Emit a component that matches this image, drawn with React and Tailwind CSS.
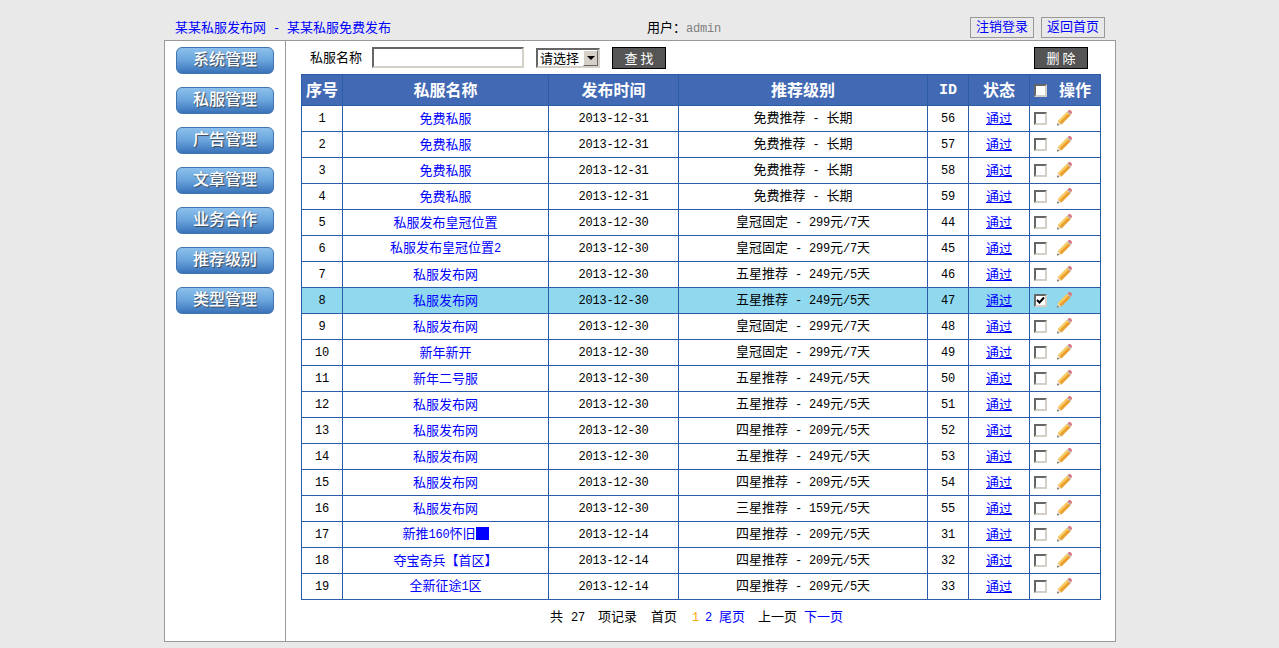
const rows = [
  [1, '免费私服', '2013-12-31', '免费推荐 - 长期', 56],
  [2, '免费私服', '2013-12-31', '免费推荐 - 长期', 57],
  [3, '免费私服', '2013-12-31', '免费推荐 - 长期', 58],
  [4, '免费私服', '2013-12-31', '免费推荐 - 长期', 59],
  [5, '私服发布皇冠位置', '2013-12-30', '皇冠固定 - 299元/7天', 44],
  [6, '私服发布皇冠位置2', '2013-12-30', '皇冠固定 - 299元/7天', 45],
  [7, '私服发布网', '2013-12-30', '五星推荐 - 249元/5天', 46],
  [8, '私服发布网', '2013-12-30', '五星推荐 - 249元/5天', 47],
  [9, '私服发布网', '2013-12-30', '皇冠固定 - 299元/7天', 48],
  [10, '新年新开', '2013-12-30', '皇冠固定 - 299元/7天', 49],
  [11, '新年二号服', '2013-12-30', '五星推荐 - 249元/5天', 50],
  [12, '私服发布网', '2013-12-30', '五星推荐 - 249元/5天', 51],
  [13, '私服发布网', '2013-12-30', '四星推荐 - 209元/5天', 52],
  [14, '私服发布网', '2013-12-30', '五星推荐 - 249元/5天', 53],
  [15, '私服发布网', '2013-12-30', '四星推荐 - 209元/5天', 54],
  [16, '私服发布网', '2013-12-30', '三星推荐 - 159元/5天', 55],
  [17, '新推160怀旧', '2013-12-14', '四星推荐 - 209元/5天', 31],
  [18, '夺宝奇兵【首区】', '2013-12-14', '四星推荐 - 209元/5天', 32],
  [19, '全新征途1区', '2013-12-14', '四星推荐 - 209元/5天', 33],
];

const menu = ['系统管理', '私服管理', '广告管理', '文章管理', '业务合作', '推荐级别', '类型管理'];

// latin runs are narrower than the cjk ones, like the old bitmap font
function Txt({ children, bold }) {
  const parts = String(children).split(/([\x20-\x7e]+)/).filter(Boolean);
  return parts.map((p, i) =>
    /^[\x20-\x7e]+$/.test(p) ? (
      <span key={i} className={`font-['Liberation_Mono',monospace] whitespace-pre ${bold ? 'font-bold text-[15px]' : 'text-[12px] tracking-[-0.2px]'}`}>{p}</span>
    ) : (
      <span key={i}>{p}</span>
    )
  );
}

function Check({ checked }) {
  return (
    <span className="inline-flex w-[13px] h-[13px] shrink-0 items-center justify-center bg-white border-2 border-t-[#666666] border-l-[#666666] border-r-[#d4d0c8] border-b-[#d4d0c8]">
      {checked && (
        <svg width="9" height="9" viewBox="0 0 9 9">
          <path d="M1 4l2.5 2.5L8 1.5" fill="none" stroke="#000" strokeWidth="2" />
        </svg>
      )}
    </span>
  );
}

function Pencil() {
  return (
    <svg width="16" height="16" viewBox="0 0 16 16" className="shrink-0 mb-[2px]">
      <path d="M1 15.5l1-4.5 3.5 3.5z" fill="#e6d6b4" />
      <path d="M1 15.5l.5-2 1.5 1.5z" fill="#555555" />
      <path d="M2 11l9-9 3.5 3.5-9 9z" fill="#eb9f2e" />
      <path d="M2 11l9-9 1.4 1.4-9 9z" fill="#f9cf66" />
      <path d="M11.8 1.2l1-.9c.5-.4 1.1-.4 1.6 0l1.3 1.3c.4.5.4 1.1 0 1.6l-.9 1z" fill="#d9737c" />
      <path d="M11 2l.8-.8 3.5 3.5-.8.8z" fill="#b4b4b4" />
    </svg>
  );
}

function DarkBtn({ children, className = '' }) {
  return (
    <button className={`h-[22px] w-[54px] bg-[#555555] border border-black text-white text-[13px] leading-none pb-[2px] ${className}`}>
      {children}
    </button>
  );
}

function TopBtn({ children }) {
  return (
    <a className="flex items-center justify-center h-[21px] w-[64px] pb-[3px] border border-[#999999] text-[#0000ff] text-[13px]">
      {children}
    </a>
  );
}

const th = 'border border-[#2b5ca8] bg-[#4169b4] text-white font-bold text-[16px] leading-[20px] p-0 pb-[3px]';
const td = 'border border-[#2b5ca8] text-center p-0 pb-[2px] leading-[18px]';

export default function App() {
  return (
    <div className="min-h-[648px] bg-[#e9e9e9] pl-[164px] font-['Noto_Sans_CJK_SC',sans-serif] text-[13px] text-black">
      <div className="w-[952px]">
        <div className="h-[40px] flex items-end pb-[2px]">
          <div className="w-[472px] pl-[11px] text-[#0000ff] leading-[18px] shrink-0">
            <Txt>某某私服发布网 - 某某私服免费发布</Txt>
          </div>
          <div className="w-[330px] pl-[11px] leading-[18px] shrink-0">
            用户：<span className="text-[#808080]"><Txt>admin</Txt></span>
          </div>
          <div className="flex gap-[7px] ml-[4px]">
            <TopBtn>注销登录</TopBtn>
            <TopBtn>返回首页</TopBtn>
          </div>
        </div>

        <div className="h-[602px] flex border border-[#999999] bg-white">
          <div className="w-[121px] shrink-0 border-r border-[#999999] pt-[6px] pl-[11px] flex flex-col gap-[13px]">
            {menu.map((m) => (
              <a key={m} className="flex items-center justify-center w-[98px] h-[27px] pb-[5px] rounded-[6px] border border-[#3f74b0] bg-gradient-to-b from-[#8cc0ec] via-[#6aa4dc] to-[#3a72b8] text-white text-[16px] font-medium [text-shadow:1px_1px_1px_#3a4558]">
                {m}
              </a>
            ))}
          </div>

          <div className="flex-1 pl-[15px]">
            <div className="h-[33px] flex items-start pt-[6px]">
              <span className="w-[71px] pl-[9px] leading-[20px]">私服名称</span>
              <input className="w-[152px] h-[21px] bg-white border-2 border-t-[#666666] border-l-[#666666] border-r-[#d4d0c8] border-b-[#d4d0c8] outline-none" />
              <div className="ml-[12px] mt-[1px] w-[64px] h-[20px] flex items-center bg-white border-2 border-t-[#666666] border-l-[#666666] border-r-[#d4d0c8] border-b-[#d4d0c8]">
                <span className="flex-1 pl-[2px] pb-[2px] leading-none">请选择</span>
                <span className="w-[15px] h-full flex items-center justify-center bg-[#d4d0c8] border border-t-white border-l-white border-r-[#666666] border-b-[#666666]">
                  <span className="w-0 h-0 border-x-[4px] border-x-transparent border-t-[4px] border-t-black" />
                </span>
              </div>
              <DarkBtn className="ml-[12px]">查 找</DarkBtn>
              <DarkBtn className="ml-[368px]">删 除</DarkBtn>
            </div>

            <table className="w-[799px] table-fixed border-collapse">
              <colgroup>
                <col className="w-[41px]" />
                <col className="w-[206px]" />
                <col className="w-[130px]" />
                <col className="w-[249px]" />
                <col className="w-[41px]" />
                <col className="w-[61px]" />
                <col className="w-[71px]" />
              </colgroup>
              <thead>
                <tr className="h-[31px]">
                  <th className={th}>序号</th>
                  <th className={th}>私服名称</th>
                  <th className={th}>发布时间</th>
                  <th className={th}>推荐级别</th>
                  <th className={th}><Txt bold>ID</Txt></th>
                  <th className={th}>状态</th>
                  <th className={`${th} !pb-0`}>
                    <div className="flex items-center pl-[4px]">
                      <Check />
                      <span className="ml-[12px] pb-[3px]">操作</span>
                    </div>
                  </th>
                </tr>
              </thead>
              <tbody>
                {rows.map((r) => {
                  const sel = r[0] === 8;
                  return (
                    <tr key={r[0]} className={`h-[26px] ${sel ? 'bg-[#90d8ee]' : ''}`}>
                      <td className={td}><Txt>{r[0]}</Txt></td>
                      <td className={`${td} text-[#0000ff]`}>
                        <Txt>{r[1]}</Txt>
                        {r[0] === 17 && <span className="inline-block align-[-2px] w-[13px] h-[13px] bg-[#0000ff]" />}
                      </td>
                      <td className={td}><Txt>{r[2]}</Txt></td>
                      <td className={td}><Txt>{r[3]}</Txt></td>
                      <td className={td}><Txt>{r[4]}</Txt></td>
                      <td className={td}><a className="text-[#0000ff] underline">通过</a></td>
                      <td className={`${td} !pb-0`}>
                        <div className="flex items-center pl-[4px] gap-[9px]">
                          <Check checked={sel} />
                          <Pencil />
                        </div>
                      </td>
                    </tr>
                  );
                })}
              </tbody>
            </table>

            <div className="w-[791px] flex justify-center items-center h-[34px] pb-[2px] whitespace-pre">
              <span>共</span>
              <span className="ml-[8px]"><Txt>27</Txt></span>
              <span className="ml-[13px]">项记录</span>
              <span className="ml-[14px]">首页</span>
              <span className="ml-[15px] text-[#ffa500]"><Txt>1</Txt></span>
              <span className="ml-[6px] text-[#0000ff]"><Txt>2</Txt></span>
              <span className="ml-[7px] text-[#0000ff]">尾页</span>
              <span className="ml-[13px]">上一页</span>
              <span className="ml-[7px] text-[#0000ff]">下一页</span>
            </div>
          </div>
        </div>
      </div>
    </div>
  );
}
